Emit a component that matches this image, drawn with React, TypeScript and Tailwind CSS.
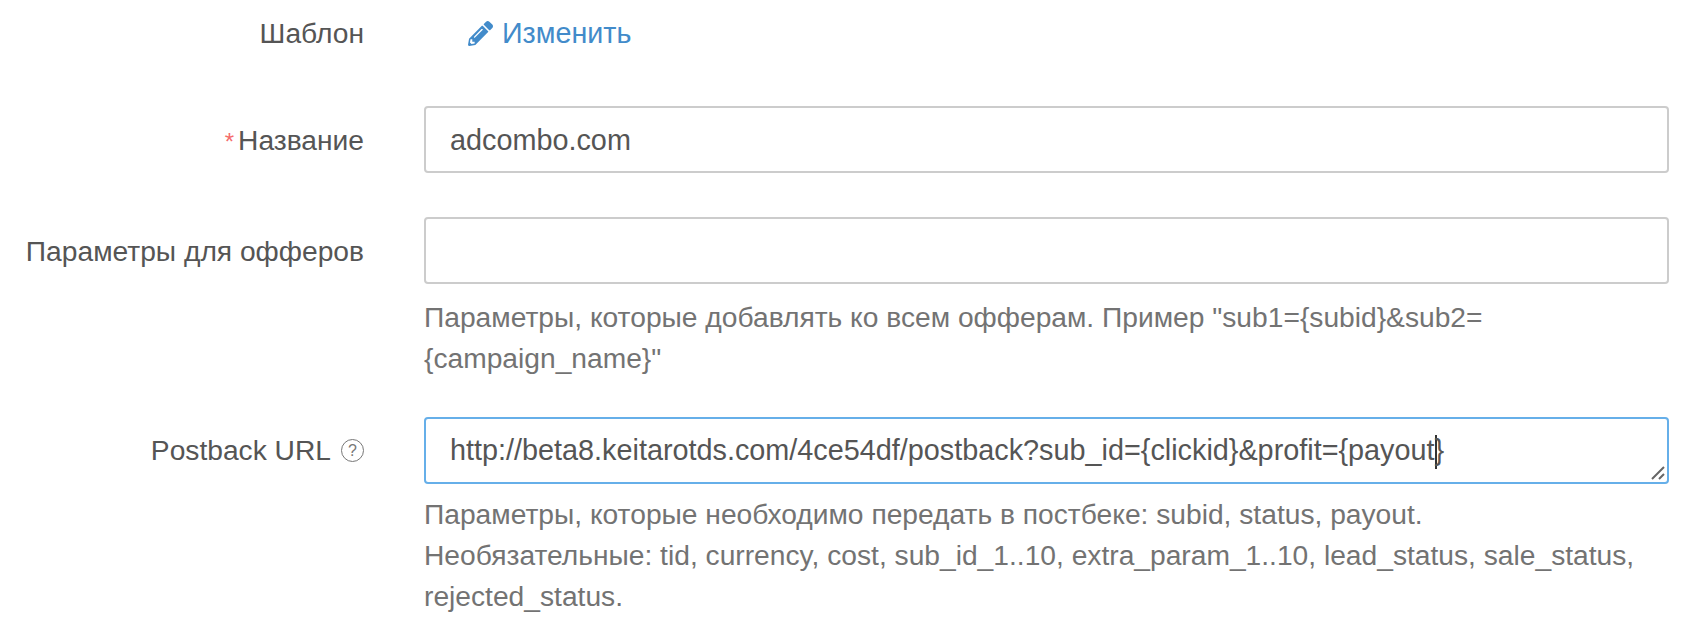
import { FaPencilAlt } from "react-icons/fa";

const labelCls = "w-[364px] shrink-0 text-right text-[28.2px] leading-[67px] text-[#555555]";
const inputCls = "block h-[67px] w-full rounded-[4px] border-2 border-[#cccccc] bg-white px-[24px] pt-[2px] text-[28.8px] text-[#555555] outline-none";
const helpCls = "text-[28.2px] leading-[41px] text-[#737373]";

export default function App() {
  return (
    <div className="w-[1702px] h-[644px] overflow-hidden bg-white font-['Liberation_Sans',sans-serif]">
      <div className="flex h-[67px]">
        <div className={labelCls}>Шаблон</div>
        <div className="ml-[104px] flex items-center gap-[9px] text-[28.7px] text-[#428bca]">
          <FaPencilAlt className="w-[25px] h-[25px]" />
          Изменить
        </div>
      </div>

      <div className="flex mt-[39px]">
        <div className={`${labelCls} pt-[1px]`}>
          <span className="mr-[4px] text-[24px] text-[#f56c6c]">*</span>Название
        </div>
        <div className="ml-[60px] w-[1245px]">
          <input className={inputCls} defaultValue="adcombo.com" readOnly />
        </div>
      </div>

      <div className="flex mt-[42px]">
        <div className={`${labelCls} pt-[1px]`}>Параметры для офферов</div>
        <div className="ml-[60px] w-[1245px]">
          <input className={inputCls} readOnly />
          <div className={`${helpCls} mt-[13px]`}>
            Параметры, которые добавлять ко всем офферам. Пример "sub1={"{subid}"}&sub2=
            <br />
            {"{campaign_name}"}"
          </div>
        </div>
      </div>

      <div className="flex mt-[38px]">
        <div className={`${labelCls} flex items-center justify-end h-[67px] gap-[10px]`}>
          Postback URL
          <span className="flex h-[23px] w-[23px] items-center justify-center rounded-full border border-[#777777] text-[16px] leading-none text-[#777777]">
            ?
          </span>
        </div>
        <div className="ml-[60px] w-[1245px]">
          <div className="relative flex h-[67px] items-center rounded-[4px] border-2 border-[#66afe9] bg-white px-[24px] text-[28.8px] text-[#555555]">
            <span>
              {"http://beta8.keitarotds.com/4ce54df/postback?sub_id={clickid}&profit={payout"}
              <span className="inline-block h-[34px] w-[2px] -mr-[2px] align-middle bg-[#333333]"></span>
              {"}"}
            </span>
            <svg className="absolute bottom-[1px] right-[1px] h-[16px] w-[16px]" viewBox="0 0 16 16">
              <path d="M2 14 L14 2 M9 14 L14 9" stroke="#666666" strokeWidth="2" fill="none" />
            </svg>
          </div>
          <div className={`${helpCls} mt-[10px]`}>
            Параметры, которые необходимо передать в постбеке: subid, status, payout.
            <br />
            Необязательные: tid, currency, cost, sub_id_1..10, extra_param_1..10, lead_status, sale_status,
            <br />
            rejected_status.
          </div>
        </div>
      </div>
    </div>
  );
}
